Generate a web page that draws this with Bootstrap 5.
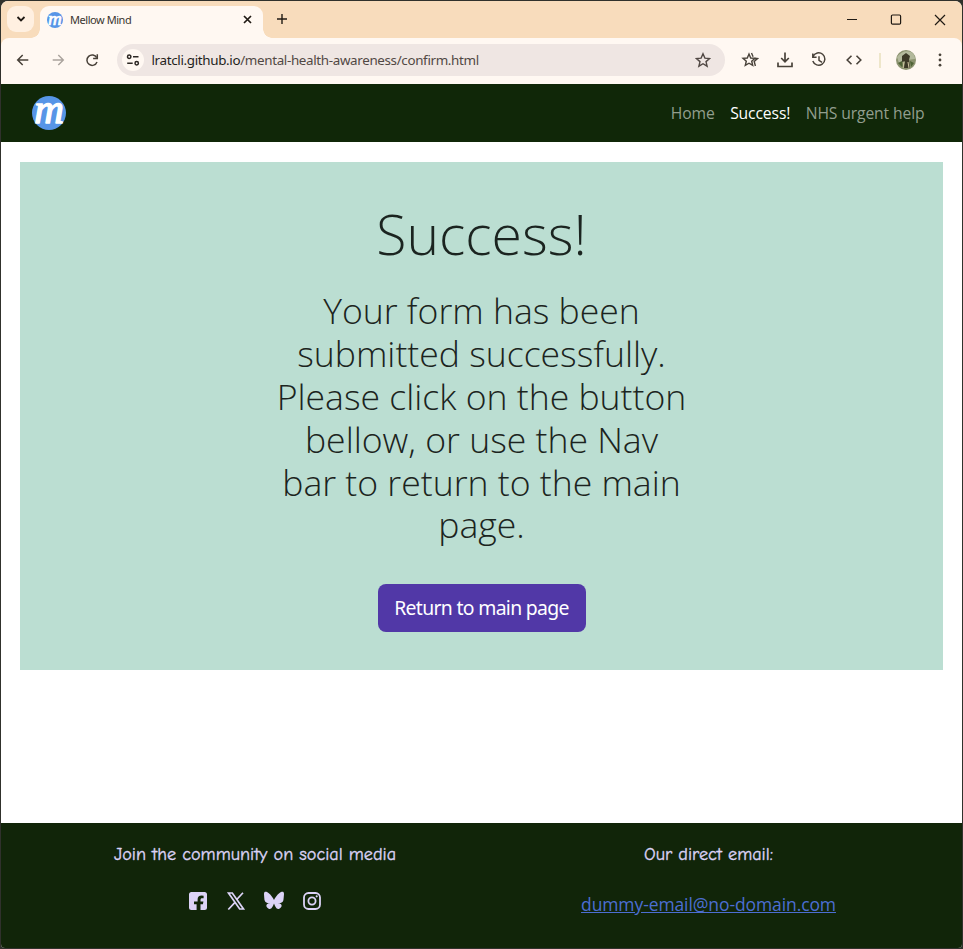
<!DOCTYPE html>
<html lang="en">
<head>
<meta charset="utf-8">
<meta name="viewport" content="width=device-width, initial-scale=1">
<title>Mellow Mind</title>
<link href="https://cdn.jsdelivr.net/npm/bootstrap@5.3.0/dist/css/bootstrap.min.css" rel="stylesheet">
<style>
html, body { height: 100%; }
body { background: #30312c; padding: 1px; overflow: hidden; font-family: "Open Sans", sans-serif; }
.window { height: 947px; background: #fff; border-radius: 7px 7px 4px 4px; overflow: hidden; }
.titlebar { height: 37px; background: #f8dcbc; padding-left: 6px; color: #201a14; }
.tab-search { width: 27px; height: 26px; margin-top: 5px; border-radius: 9px; background: #fff0e1; }
.browser-tab { width: 223px; height: 32px; margin: 5px 0 0 6px; padding: 0 11px 5px 7px; background: #fff8f2; border-radius: 9px 9px 0 0; font: 11px "Noto Sans", sans-serif; position: relative; }
.browser-tab::before, .browser-tab::after { content: ""; position: absolute; bottom: 0; width: 9px; height: 9px; }
.browser-tab::before { left: -9px; background: radial-gradient(circle at 0 0, transparent 8.5px, #fff8f2 9px); }
.browser-tab::after { right: -9px; background: radial-gradient(circle at 100% 0, transparent 8.5px, #fff8f2 9px); }
.tab-title { margin-left: 7px; letter-spacing: -.45px; color: #3b352f; }
.new-tab { margin: 12px 0 0 13px; }
.window-controls { gap: 30px; padding: 10px 15px 0 0; }
.titlebar svg, .toolbar svg, .social svg, .brand-mark { display: block; flex: none; }
.toolbar-bg { height: 46px; background: #f8dcbc; }
.toolbar { height: 46px; background: #fff8f2; border-radius: 8px 8px 0 0; padding: 0 0 2px 14px; color: #49423a; }
.nav-icons { gap: 18.5px; }
.address { flex: none; width: 608px; height: 32px; margin-left: 16.5px; border-radius: 16px; background: #efe6e3; padding: 0 14px 0 5px; font: 13.4px "Noto Sans", sans-serif; color: #514844; }
.site-info { width: 22px; height: 22px; border-radius: 50%; background: #fff8f2; color: #2c2723; }
.url { margin-left: 8px; letter-spacing: -.34px; white-space: nowrap; }
.url b { font-weight: 400; color: #231e1b; }
.action-icons { gap: 16.6px; margin-left: 16.5px; }
.divider { width: 2px; height: 15px; background: #eee6ca; }
.avatar { margin-left: -2px; }
.menu-dots { margin-left: -1.5px; }
.site-nav { height: 58px; background: #102708; padding: 0 29.5px 0 30.5px; }
.site-nav .nav-link { padding: 0; font-size: 15.7px; letter-spacing: -.13px; color: #929e8e; white-space: nowrap; }
.site-nav .nav-link.active { color: #fff; }
.links { gap: 15.5px; padding: 1px 8px 0 0; }
.page { height: 682px; padding: 20px 19px 0; }
.success-panel { height: 508px; background: #bbded2; color: #1b2420; padding-top: 38.5px; }
.success-panel h1 { font-size: 55.3px; line-height: 67px; font-weight: 300; margin-bottom: 22px; }
.success-panel h2 { font-size: 35.6px; line-height: 42.8px; font-weight: 300; margin-bottom: 37.5px; white-space: nowrap; }
.btn-return { width: 208px; height: 48px; border-radius: 8px; background: #5138a7; color: #fff; padding: 0; font: 19.4px/48px "Noto Sans", sans-serif; letter-spacing: -.68px; border: 0; }
.btn-return:hover { background: #432d91; color: #fff; }
.site-footer { height: 125px; background: #112509; color: #dcd3f7; }
.site-footer .caption { font: 18.2px/24px "Comic Sans MS", "Comic Neue", "Noto Sans", sans-serif; -webkit-text-stroke: .35px currentColor; margin: 20px 0 0; white-space: nowrap; }
.social { gap: 18px; margin-top: 24px; }
.email { margin-top: 24px; font-size: 17.5px; letter-spacing: -.1px; line-height: 26px; color: #4c6ed2; }
.community { width: 508px; }
.contact { width: 399px; }
</style>
</head>
<body>
<svg class="d-none">
  <symbol id="mark-m" viewBox="0 0 34 34"><circle cx="17" cy="17" r="17" fill="#5795e7"/><text x="17" y="27" text-anchor="middle" font-family="Liberation Serif, serif" font-size="41" font-style="italic" fill="#fff" stroke="#fff" stroke-width="1.5" stroke-linejoin="round">m</text></symbol>
</svg>
<div class="window d-flex flex-column">
  <div class="titlebar d-flex align-items-start">
    <div class="tab-search d-flex align-items-center justify-content-center"><svg width="10" height="8" viewBox="0 0 10 8" fill="none" stroke="currentColor" stroke-width="1.8"><path d="M1.5 2 5 5.5 8.5 2"/></svg></div>
    <div class="browser-tab d-flex align-items-center">
      <svg width="16" height="16"><use href="#mark-m"/></svg><span class="tab-title">Mellow Mind</span>
      <svg class="ms-auto" width="9" height="9" viewBox="0 0 9 9" stroke="currentColor" stroke-width="1.7"><path d="m1 1 7 7M8 1 1 8"/></svg>
    </div>
    <svg class="new-tab" width="12" height="12" viewBox="0 0 12 12" stroke="currentColor" stroke-width="1.4"><path d="M6 1v10M1 6h10"/></svg>
    <div class="window-controls d-flex ms-auto">
      <svg width="14" height="16" viewBox="0 0 14 16" stroke="currentColor" stroke-width="1.2"><path d="M2 8.5h10"/></svg>
      <svg width="14" height="16" viewBox="0 0 14 16" fill="none" stroke="currentColor" stroke-width="1.2"><rect x="2.4" y="4" width="9.2" height="9.2" rx="1.2"/></svg>
      <svg width="14" height="16" viewBox="0 0 14 16" stroke="currentColor" stroke-width="1.2"><path d="m2 4 10 10M12 4l-10 10"/></svg>
    </div>
  </div>
  <div class="toolbar-bg"><div class="toolbar d-flex align-items-center">
    <div class="nav-icons d-flex">
      <svg width="16" height="16" viewBox="0 0 16 16" fill="none" stroke="currentColor" stroke-width="1.5"><path d="M13.3 8H2.8M7.7 3 2.700 8l5 5"/></svg>
      <svg width="16" height="16" viewBox="0 0 16 16" fill="none" stroke="#aaa39d" stroke-width="1.4"><path d="M2.700 8h10.500M8.300 3l5 5-5 5"/></svg>
      <svg width="16" height="16" viewBox="0 0 16 16" fill="none" stroke="currentColor" stroke-width="1.5"><path d="M12.700 5.700A5.200 5.200 0 1 0 13 10"/><path d="M13.300 2.200v4.200H9.100"/></svg>
    </div>
    <div class="address d-flex align-items-center">
      <span class="site-info d-flex align-items-center justify-content-center"><svg width="14" height="12" viewBox="0 0 14 12" fill="none" stroke="currentColor" stroke-width="1.5"><circle cx="3.200" cy="2.800" r="1.700"/><path d="M7 2.800h5.500M1.200 9.200h5.500"/><circle cx="10.700" cy="9.200" r="1.700"/></svg></span>
      <span class="url"><b>lratcli.github.io</b>/mental-health-awareness/confirm.html</span>
      <svg class="ms-auto" width="16" height="16" viewBox="0 0 16 16" fill="none" stroke="currentColor" stroke-width="1.4"><path d="m8 1.800 1.900 4.300 4.700.4-3.600 3.100 1.100 4.600L8 11.700l-4.100 2.500L5 9.600 1.400 6.500l4.700-.4z"/></svg>
    </div>
    <div class="action-icons d-flex align-items-center">
      <svg width="18" height="18" viewBox="0 0 18 18" fill="none" stroke="currentColor" stroke-width="1.4"><path d="m8 3 1.700 4 4.300.4-3.300 2.800 1 4.200L8 12.200l-3.700 2.200 1-4.200L2 7.400 6.300 7zM10.500 2l1.600 3.700M13.500 7.300l3 .3-3.300 2.800 1.200 4.600"/></svg>
      <svg width="18" height="18" viewBox="0 0 18 18" fill="none" stroke="currentColor" stroke-width="1.700"><path d="M9 1.500v9M5.200 7 9 10.800 12.800 7M2 11.500v4h14v-4"/></svg>
      <svg width="18" height="18" viewBox="0 0 18 18" fill="none" stroke="currentColor" stroke-width="1.500"><path d="M3 5.500A6.200 6.200 0 1 1 2.800 10M2.800 2.500v3.800h3.800M9 5.300v4l3 2"/></svg>
      <svg width="18" height="18" viewBox="0 0 18 18" fill="none" stroke="currentColor" stroke-width="1.600"><path d="M6.500 4.700 2.200 9l4.300 4.300M11.500 4.700 15.800 9l-4.300 4.300"/></svg>
      <span class="divider"></span>
      <svg class="avatar" width="20" height="20" viewBox="0 0 20 20"><circle cx="10" cy="10" r="10" fill="#8b926f"/><path d="M1 7Q7-1 15 2q4 2 4 7l-8 1-8 3z" fill="#b3b99c"/><path d="m6 6 4-3 4 3-1 4 1 8H8l1-7-3 1z" fill="#3c3927"/><path d="m2 13 4-2 1 7M14 11l4 2-3 4z" fill="#4f6336"/><path d="m8 12-1 6m5-6 1 6" stroke="#d1c9a4"/></svg>
      <svg class="menu-dots" width="18" height="18" viewBox="0 0 18 18" fill="currentColor"><circle cx="9" cy="3.800" r="1.400"/><circle cx="9" cy="9" r="1.400"/><circle cx="9" cy="14.200" r="1.400"/></svg>
    </div>
  </div></div>
  <nav class="site-nav d-flex align-items-center">
    <a href="#" aria-label="Mellow Mind"><svg class="brand-mark" width="34" height="34"><use href="#mark-m"/></svg></a>
    <div class="links d-flex ms-auto"><a class="nav-link" href="#">Home</a><a class="nav-link active" href="#">Success!</a><a class="nav-link" href="#">NHS urgent help</a></div>
  </nav>
  <main class="page">
    <section class="success-panel text-center">
      <h1>Success!</h1>
      <h2>Your form has been<br>submitted successfully.<br>Please click on the button<br>bellow, or use the Nav<br>bar to return to the main<br>page.</h2>
      <a class="btn btn-return" href="#">Return to main page</a>
    </section>
  </main>
  <footer class="site-footer d-flex">
    <div class="community text-center"><p class="caption">Join the community on social media</p>
      <div class="social d-flex justify-content-center">
        <svg width="20" height="20" viewBox="0 0 20 20"><path fill="currentColor" fill-rule="evenodd" d="M3.500 1h13A2.500 2.500 0 0 1 19 3.500v13a2.500 2.500 0 0 1-2.500 2.500h-4v-5.800h2.400l.5-2.800h-2.900V8.900c0-1 .5-1.600 1.600-1.600h1.500V4.800l-2-.2c-2.600 0-4 1.500-4 4.100v1.700H6v2.800h2.600V19H3.500A2.500 2.500 0 0 1 1 16.500v-13A2.500 2.500 0 0 1 3.500 1z"/></svg>
        <svg width="20" height="20" viewBox="0 0 20 20" fill="none" stroke="currentColor" stroke-width="1.700"><path d="M2.500 2h3.800l11.200 16h-3.800zM17 1.700l-6.700 7.300M9 11.300 2.300 18.500"/></svg>
        <svg width="20" height="20" viewBox="0 0 20 20" fill="currentColor"><path d="M4.500 2C7 3.800 9 7 10 9c1-2 3-5.200 5.500-7 1.800-1.300 4.500-2.300 4.500.9 0 .7-.4 5.600-.6 6.400-.8 2.700-3.300 3.100-5.300 2.800 3.600.6 4.500 2.700 2.500 4.700C12.900 20.500 11 14.900 10.300 13.300L10 12.500l-.3.800c-.7 1.600-2.600 7.200-6.300 3.500-2-2-1.100-4.100 2.500-4.700-2 .3-4.500-.1-5.300-2.800C.4 8.500 0 3.600 0 2.900 0-.3 2.700.7 4.500 2z"/></svg>
        <svg width="20" height="20" viewBox="0 0 20 20" fill="none" stroke="currentColor" stroke-width="1.800"><rect x="2" y="2" width="16" height="16" rx="4.500"/><circle cx="10" cy="10" r="3.600"/><circle cx="14.700" cy="5.300" r="1.100" fill="currentColor" stroke="none"/></svg>
      </div>
    </div>
    <div class="contact text-center"><p class="caption">Our direct email:</p><a class="email d-inline-block" href="#">dummy-email@no-domain.com</a></div>
  </footer>
</div>
<script src="https://cdn.jsdelivr.net/npm/bootstrap@5.3.0/dist/js/bootstrap.bundle.min.js"></script>
</body>
</html>
